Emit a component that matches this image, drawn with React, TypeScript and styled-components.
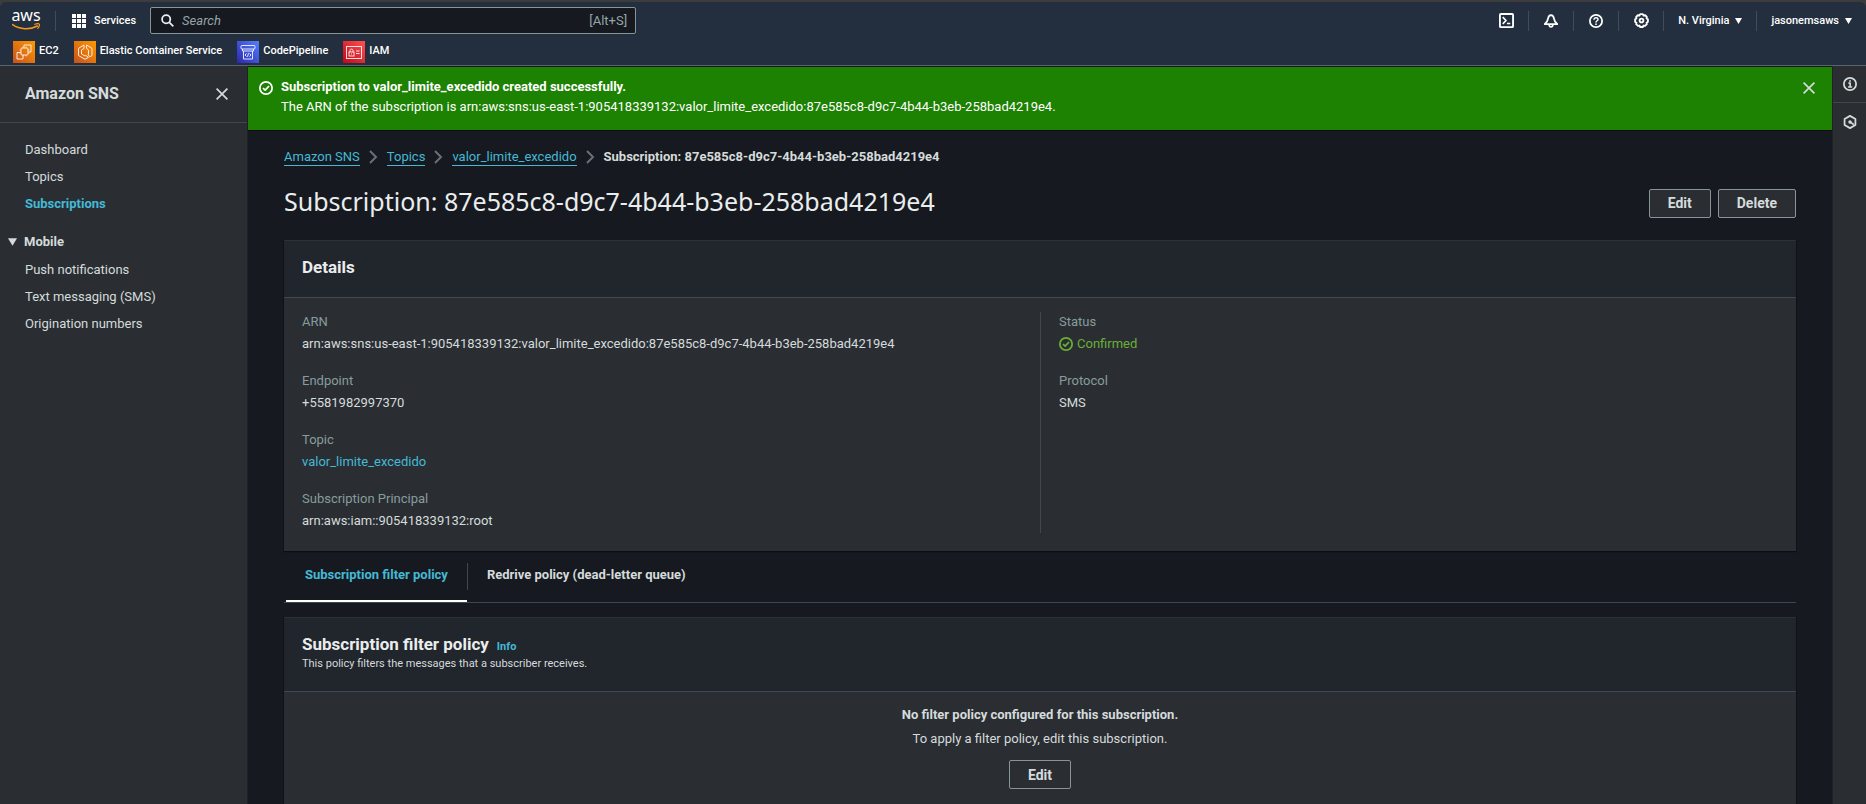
import React from 'react';
import styled, { createGlobalStyle } from 'styled-components';

const c = {
  header: '#232f3e',
  page: '#16191f',
  panel: '#2a2e33',
  panelHead: '#21252c',
  line: '#414750',
  text: '#d5dbdb',
  bright: '#eaeded',
  muted: '#879596',
  link: '#44b9d6',
  success: '#1d8102',
  confirmed: '#6aaf35',
};

const Global = createGlobalStyle`
  *, *::before, *::after { box-sizing: border-box; }
  body {
    margin: 0;
    background: #3c3c3c;
    color: ${c.text};
    font-family: Roboto, "Liberation Sans", sans-serif;
    font-size: 13px;
    line-height: 20px;
  }
  button, input { font: inherit; color: inherit; }
  button { cursor: pointer; }
  h1, h2, p, ul, ol, dl, dd { margin: 0; padding: 0; }
  ul, ol { list-style: none; }
  svg { display: block; flex: none; }
`;

const Shell = styled.div`
  display: flex;
  flex-direction: column;
  height: 100vh;
  padding-top: 2px;
`;

/* ---------- top navigation ---------- */

const Header = styled.header`
  flex: none;
  background: ${c.header};
  border-bottom: 1px solid #5a626c;
  border-radius: 6px 6px 0 0;
  color: #fff;
  font-size: 11px;
  font-weight: 500;
`;

const NavRow = styled.div`
  display: flex;
  align-items: center;
  height: 37px;
`;

const LogoLink = styled.a`
  display: flex;
  padding: 0 14px 0 12px;
`;

const Divider = styled.span`
  width: 1px;
  height: 20px;
  background: #414d5c;
`;

const PlainButton = styled.button`
  display: flex;
  align-items: center;
  justify-content: center;
  padding: 0;
  border: 0;
  background: none;
`;

const ServicesButton = styled(PlainButton)`
  gap: 8px;
  padding: 0 14px 0 16px;
`;

const SearchBox = styled.label`
  display: flex;
  align-items: center;
  width: 486px;
  height: 27px;
  padding: 0 8px 0 10px;
  gap: 8px;
  background: ${c.page};
  border: 1px solid ${c.muted};
  border-radius: 2px;
  color: #95a5a6;
  font-size: 13px;
  font-weight: 400;
`;

const SearchInput = styled.input`
  flex: 1;
  min-width: 0;
  padding: 0;
  border: 0;
  outline: 0;
  background: none;
  &::placeholder { color: #95a5a6; font-style: italic; opacity: 1; }
`;

const Tools = styled.div`
  display: flex;
  align-items: center;
  margin-left: auto;
`;

const ToolButton = styled(PlainButton)`
  width: 44px;
`;

const MenuButton = styled(PlainButton)`
  gap: 6px;
  padding: 0 14px;
`;

const Favorites = styled.nav`
  display: flex;
  gap: 15px;
  height: 26px;
  padding: 2px 13px 0;
`;

const Favorite = styled.a`
  display: flex;
  gap: 4px;
  height: 22px;
  color: #fff;
  text-decoration: none;
`;

/* ---------- page frame ---------- */

const Body = styled.div`
  display: flex;
  flex: 1;
  min-height: 0;
  background: ${c.page};
`;

const Sidebar = styled.aside`
  flex: none;
  width: 248px;
  background: ${c.panel};
  border-right: 1px solid #1e2126;
`;

const SidebarHead = styled.div`
  display: flex;
  align-items: center;
  justify-content: space-between;
  height: 57px;
  padding: 0 19px 0 25px;
  border-bottom: 1px solid ${c.line};
`;

const ServiceLink = styled.a`
  color: ${c.text};
  font-size: 16px;
  font-weight: 700;
  text-decoration: none;
`;

const NavList = styled.ul`
  padding: 0 25px;
`;

const NavBlock = styled.nav`
  padding-top: 13px;
`;

const NavLink = styled.a<{ $active?: boolean }>`
  display: block;
  color: ${(p) => (p.$active ? c.link : c.text)};
  font-weight: ${(p) => (p.$active ? 700 : 400)};
  line-height: 27px;
  text-decoration: none;
`;

const NavGroup = styled.button`
  display: flex;
  align-items: center;
  gap: 7px;
  width: 100%;
  margin: 11px 0 1px;
  padding: 0 8px;
  border: 0;
  background: none;
  font-weight: 700;
  line-height: 27px;
`;

const Main = styled.main`
  flex: 1;
  min-width: 0;
  padding-top: 1px;
  overflow-y: auto;
  scrollbar-width: none;
`;

const Rail = styled.aside`
  flex: none;
  width: 34px;
  background: ${c.panel};
  border-left: 1px solid #1e2126;
`;

const RailButton = styled(PlainButton)<{ $line?: boolean }>`
  width: 100%;
  height: 37px;
  border-bottom: ${(p) => (p.$line ? `1px solid ${c.line}` : '0')};
`;

/* ---------- content ---------- */

const Flash = styled.div`
  display: flex;
  gap: 8px;
  height: 63px;
  padding: 10px 17px 0 11px;
  background: ${c.success};
  box-shadow: 0 1px 0 #0b0d10;
  color: #fff;
`;

const FlashIcon = styled.span`
  padding-top: 4px;
`;

const FlashText = styled.div`
  flex: 1;
`;

const FlashClose = styled(PlainButton)`
  height: 22px;
`;

const Content = styled.div`
  padding: 17px 36px 18px;
`;

const Crumbs = styled.ol`
  display: flex;
  align-items: center;
  gap: 9px;
  height: 20px;
`;

const Crumb = styled.li`
  display: flex;
  align-items: center;
  gap: 9px;
`;

const CrumbLink = styled.a`
  border-bottom: 1px solid ${c.link};
  color: ${c.link};
  line-height: 17px;
  text-decoration: none;
`;

const TitleRow = styled.div`
  display: flex;
  align-items: center;
  justify-content: space-between;
  margin: 18px 0 19px;
`;

const Title = styled.h1`
  padding-bottom: 4px;
  color: ${c.bright};
  font-family: "Noto Sans", sans-serif;
  font-size: 25px;
  font-weight: 400;
  line-height: 32px;
`;

const Actions = styled.div`
  display: flex;
  gap: 7px;
`;

const Button = styled.button`
  height: 29px;
  padding: 0 18px;
  border: 1px solid ${c.muted};
  border-radius: 2px;
  background: ${c.panel};
  color: ${c.text};
  font-size: 14px;
  font-weight: 700;
`;

const Panel = styled.section`
  background: ${c.panel};
  border-top: 1px solid #2d3136;
  box-shadow: 0 1px 1px #0b0d10, -1px 0 0 #101317, 1px 0 0 #101317;
`;

const PanelHead = styled.div<{ $hinted?: boolean }>`
  padding: 16px 18px ${(p) => (p.$hinted ? '17px' : '20px')};
  background: ${c.panelHead};
  border-bottom: 1px solid ${c.line};
`;

const PanelTitleRow = styled.div`
  display: flex;
  align-items: baseline;
  gap: 8px;
  height: 20px;
`;

const PanelTitle = styled.h2`
  color: ${c.bright};
  font-size: 17px;
  font-weight: 700;
  line-height: 20px;
`;

const InfoLink = styled.a`
  color: ${c.link};
  font-size: 11px;
  font-weight: 700;
  line-height: 16px;
  text-decoration: none;
`;

const PanelHint = styled.p`
  font-size: 11px;
`;

const Columns = styled.div`
  display: grid;
  grid-template-columns: 1fr 1fr;
  padding: 14px 18px 18px;
`;

const Column = styled.dl<{ $ruled?: boolean }>`
  display: flex;
  flex-direction: column;
  gap: 15px;
  padding-left: ${(p) => (p.$ruled ? '18px' : '0')};
  border-left: ${(p) => (p.$ruled ? `1px solid ${c.line}` : '0')};
`;

const Label = styled.dt`
  color: #879c9c;
`;

const Value = styled.dd`
  line-height: 24px;
`;

const ValueLink = styled.a`
  color: ${c.link};
  text-decoration: none;
`;

const Status = styled.span`
  display: flex;
  align-items: center;
  gap: 4px;
  color: ${c.confirmed};
`;

const Tabs = styled.div`
  display: flex;
  align-items: stretch;
  height: 52px;
  margin-bottom: 14px;
  padding-left: 2px;
  border-bottom: 1px solid ${c.line};
`;

const Tab = styled.button<{ $active?: boolean }>`
  padding: 0 19px 1px;
  border: 0;
  border-bottom: 2px solid ${(p) => (p.$active ? '#fff' : 'transparent')};
  background: none;
  color: ${(p) => (p.$active ? c.link : c.text)};
  font-weight: 700;
`;

const TabRule = styled.span`
  width: 1px;
  height: 27px;
  margin-top: 12px;
  background: ${c.line};
`;

const Empty = styled.div`
  display: flex;
  flex-direction: column;
  align-items: center;
  gap: 4px;
  padding: 13px 18px 24px;
`;

const EmptyAction = styled.div`
  padding-top: 7px;
`;

/* ---------- drawings ---------- */

const AwsLogo = () => (
  <svg width="29" height="36" viewBox="0 -8 29 36" role="img" aria-label="AWS">
    <text x="14" y="10" textAnchor="middle" fontFamily="Noto Sans, sans-serif" fontSize="16" fontWeight="400" fill="#fff">aws</text>
    <path d="M.6 13.6C8 18.8 18 18.9 25.4 15" fill="none" stroke="#f7981d" strokeWidth="1.6" strokeLinecap="round" />
    <path d="M22.8 13.3c1.8-.6 4-.6 4.5-.2s0 2.8-1.5 4.3" fill="none" stroke="#f7981d" strokeWidth="1.2" strokeLinecap="round" />
  </svg>
);

const GridIcon = () => (
  <svg width="14" height="14" viewBox="0 0 14 14" fill="#fff" aria-hidden="true">
    {[0, 5, 10].map((y) => [0, 5, 10].map((x) => <rect key={`${x}-${y}`} x={x} y={y} width="4" height="4" />))}
  </svg>
);

const SearchIcon = () => (
  <svg width="13" height="13" viewBox="0 0 13 13" fill="none" stroke="#eaeded" strokeWidth="1.8" aria-hidden="true">
    <circle cx="5.2" cy="5.2" r="4.1" />
    <path d="M8.3 8.3l4 4" />
  </svg>
);

const Icon = ({ children, color = '#fff', size = 14 }: { children: React.ReactNode; color?: string; size?: number }) => (
  <svg width={size} height={size} viewBox="0 0 16 16" fill="none" stroke={color} strokeWidth="2" strokeLinejoin="round" aria-hidden="true">
    {children}
  </svg>
);

const ShellIcon = () => (
  <Icon size={15}>
    <rect x="1" y="1" width="14" height="14" rx="1" />
    <path d="M4 4.5L7.5 8 4 11.5M8.5 11.2H12" strokeWidth="1.8" />
  </Icon>
);

const BellIcon = () => (
  <Icon>
    <path d="M8 1.2C5.8 1.4 4.9 3 4.7 5c-.2 2.8-1.7 4.4-3.9 6.600h14.400C13 9.400 11.500 7.800 11.300 5 11.100 3 10.200 1.400 8 1.200z" />
    <path d="M5.800 12.300c.2 1.600 1 2.500 2.200 2.500s2-.9 2.200-2.500" />
  </Icon>
);

const HelpIcon = () => (
  <Icon>
    <circle cx="8" cy="8" r="7" />
    <path d="M5.7 6.500C5.700 5 6.700 4.200 8 4.200s2.300.9 2.300 2.100C10.300 7.700 8 7.800 8 9.600" strokeWidth="1.7" />
    <circle cx="8" cy="11.7" r="1" fill="#fff" stroke="none" />
  </Icon>
);

const GearIcon = () => (
  <Icon size={15}>
    <path d="M6.600 1.200h2.800l.8 1.500 1.700-.3 1.800 1.800-.3 1.600 1.400.9v2.700l-1.400.8.3 1.700-1.900 1.800-1.600-.3-.8 1.500H6.600l-.8-1.500-1.600.3-1.900-1.800.3-1.700-1.400-.8V6.700l1.400-.9-.3-1.600 1.800-1.800 1.700.3z" />
    <circle cx="8" cy="8" r="2" />
  </Icon>
);

const Caret = ({ width = 7, color = '#fff' }: { width?: number; color?: string }) => (
  <svg width={width} height={width - 1} viewBox="0 0 7 6" fill={color} aria-hidden="true">
    <path d="M0 0h7L3.500 6z" />
  </svg>
);

const CloseIcon = () => (
  <svg width="12" height="12" viewBox="0 0 12 12" stroke={c.text} strokeWidth="1.7" aria-hidden="true">
    <path d="M.6.6l10.800 10.800M11.400.6L.6 11.400" />
  </svg>
);

const CheckIcon = ({ color }: { color: string }) => (
  <Icon color={color}>
    <circle cx="8" cy="8" r="7" />
    <path d="M4.600 8.200L7 10.500l4.500-4.800" />
  </Icon>
);

const Chevron = () => (
  <svg width="9" height="14" viewBox="0 0 9 14" fill="none" stroke="#687078" strokeWidth="2" aria-hidden="true">
    <path d="M1 1l6 6-6 6" />
  </svg>
);

const InfoIcon = () => (
  <Icon color={c.text}>
    <circle cx="8" cy="8" r="7" />
    <path d="M6.200 7h2v4.500M5.800 11.500h4.600M7 4.500h2" strokeWidth="1.8" />
  </Icon>
);

const HexIcon = () => (
  <Icon color={c.text}>
    <path d="M8 1l6.200 3.500v7L8 15l-6.200-3.500v-7z" />
    <circle cx="8" cy="8" r="2" fill={c.text} stroke="none" />
    <path d="M8 8l4.500 3" />
  </Icon>
);

const Tile = ({ id, from, to, children }: { id: string; from: string; to: string; children: React.ReactNode }) => (
  <svg width="22" height="22" viewBox="0 0 22 22" fill="none" stroke="#fff" strokeOpacity=".85" aria-hidden="true">
    <linearGradient id={id} x1="0" y1="1" x2="1" y2="0">
      <stop offset="0" stopColor={from} />
      <stop offset="1" stopColor={to} />
    </linearGradient>
    <rect width="22" height="22" fill={`url(#${id})`} stroke="none" />
    {children}
  </svg>
);

const favorites = [
  {
    name: 'EC2', from: '#c8511b', to: '#ff9900',
    art: <><path d="M10 14.500v3.500H4v-6.500h3.500M11 6.500V4h7v7h-2.500" /><rect x="8" y="7" width="7" height="7" rx="1" /><path d="M10 5.500V7M13 5.500V7M10 14v1.500M13 14v1.500M6.500 9H8M6.500 12H8M15 9h1.500M15 12h1.500" strokeWidth=".8" /></>,
  },
  {
    name: 'Elastic Container Service', from: '#c8511b', to: '#ff9900',
    art: <path d="M10 4L4.500 7.300v7.200L11 18.300l3.500-2-2.500-1.800-1 .5-3.500-2V9L10 7.500zM12.500 4L18 7.300v7.200l-2 1.200-2-1.700.5-1V9L12.500 7.500z" />,
  },
  {
    name: 'CodePipeline', from: '#2e27ad', to: '#527fff',
    art: <><rect x="4" y="4.500" width="14" height="3.500" rx="1" /><path d="M5.500 8v2h11V8M6.500 10v8h9v-8M9.500 12.500L8 14l1.500 1.500M12.500 12.500L14 14l-1.500 1.500M11.500 12.200l-1 3.600" /></>,
  },
  {
    name: 'IAM', from: '#bd0816', to: '#ff5252',
    art: <><rect x="3.500" y="5.500" width="15" height="12" /><rect x="6" y="11" width="5" height="4" /><path d="M7 11V9.500C7 8.500 7.700 8 8.500 8s1.500.5 1.500 1.500V11M13 10h3.500M13 12.500h3.500M8.500 12.500v1" /></>,
  },
];

const tools = [
  { name: 'CloudShell', icon: <ShellIcon /> },
  { name: 'Notifications', icon: <BellIcon /> },
  { name: 'Help', icon: <HelpIcon /> },
  { name: 'Settings', icon: <GearIcon /> },
];

const Field = ({ label, children }: { label: string; children: React.ReactNode }) => (
  <div>
    <Label>{label}</Label>
    <Value>{children}</Value>
  </div>
);

export default function App() {
  return (
    <>
      <Global />
      <Shell>
        <Header>
          <NavRow>
            <LogoLink href="#"><AwsLogo /></LogoLink>
            <Divider />
            <ServicesButton><GridIcon />Services</ServicesButton>
            <SearchBox>
              <SearchIcon />
              <SearchInput type="text" placeholder="Search" aria-label="Search" />
              <span>[Alt+S]</span>
            </SearchBox>
            <Tools>
              {tools.map((t) => (
                <React.Fragment key={t.name}>
                  <ToolButton aria-label={t.name}>{t.icon}</ToolButton>
                  <Divider />
                </React.Fragment>
              ))}
              <MenuButton>N. Virginia<Caret /></MenuButton>
              <Divider />
              <MenuButton>jasonemsaws<Caret /></MenuButton>
            </Tools>
          </NavRow>
          <Favorites aria-label="Favorites">
            {favorites.map((f, i) => (
              <Favorite key={f.name} href="#">
                <Tile id={`tile-${i}`} from={f.from} to={f.to}>{f.art}</Tile>
                {f.name}
              </Favorite>
            ))}
          </Favorites>
        </Header>

        <Body>
          <Sidebar>
            <SidebarHead>
              <ServiceLink href="#">Amazon SNS</ServiceLink>
              <PlainButton aria-label="Close navigation"><CloseIcon /></PlainButton>
            </SidebarHead>
            <NavBlock>
              <NavList>
                <li><NavLink href="#">Dashboard</NavLink></li>
                <li><NavLink href="#">Topics</NavLink></li>
                <li><NavLink href="#" $active>Subscriptions</NavLink></li>
              </NavList>
              <NavGroup aria-expanded="true"><Caret width={9} color={c.text} />Mobile</NavGroup>
              <NavList>
                <li><NavLink href="#">Push notifications</NavLink></li>
                <li><NavLink href="#">Text messaging (SMS)</NavLink></li>
                <li><NavLink href="#">Origination numbers</NavLink></li>
              </NavList>
            </NavBlock>
          </Sidebar>

          <Main>
            <Flash role="status">
              <FlashIcon><CheckIcon color="#fff" /></FlashIcon>
              <FlashText>
                <p><b>Subscription to valor_limite_excedido created successfully.</b></p>
                <p>The ARN of the subscription is arn:aws:sns:us-east-1:905418339132:valor_limite_excedido:87e585c8-d9c7-4b44-b3eb-258bad4219e4.</p>
              </FlashText>
              <FlashClose aria-label="Dismiss"><CloseIcon /></FlashClose>
            </Flash>

            <Content>
              <Crumbs>
                {['Amazon SNS', 'Topics', 'valor_limite_excedido'].map((name) => (
                  <Crumb key={name}><CrumbLink href="#">{name}</CrumbLink><Chevron /></Crumb>
                ))}
                <Crumb><b>Subscription: 87e585c8-d9c7-4b44-b3eb-258bad4219e4</b></Crumb>
              </Crumbs>

              <TitleRow>
                <Title>Subscription: 87e585c8-d9c7-4b44-b3eb-258bad4219e4</Title>
                <Actions>
                  <Button>Edit</Button>
                  <Button>Delete</Button>
                </Actions>
              </TitleRow>

              <Panel>
                <PanelHead><PanelTitle>Details</PanelTitle></PanelHead>
                <Columns>
                  <Column>
                    <Field label="ARN">arn:aws:sns:us-east-1:905418339132:valor_limite_excedido:87e585c8-d9c7-4b44-b3eb-258bad4219e4</Field>
                    <Field label="Endpoint">+5581982997370</Field>
                    <Field label="Topic"><ValueLink href="#">valor_limite_excedido</ValueLink></Field>
                    <Field label="Subscription Principal">arn:aws:iam::905418339132:root</Field>
                  </Column>
                  <Column $ruled>
                    <Field label="Status"><Status><CheckIcon color={c.confirmed} />Confirmed</Status></Field>
                    <Field label="Protocol">SMS</Field>
                  </Column>
                </Columns>
              </Panel>

              <Tabs role="tablist">
                <Tab role="tab" aria-selected="true" $active>Subscription filter policy</Tab>
                <TabRule />
                <Tab role="tab" aria-selected="false">Redrive policy (dead-letter queue)</Tab>
              </Tabs>

              <Panel>
                <PanelHead $hinted>
                  <PanelTitleRow>
                    <PanelTitle>Subscription filter policy</PanelTitle>
                    <InfoLink href="#">Info</InfoLink>
                  </PanelTitleRow>
                  <PanelHint>This policy filters the messages that a subscriber receives.</PanelHint>
                </PanelHead>
                <Empty>
                  <b>No filter policy configured for this subscription.</b>
                  <p>To apply a filter policy, edit this subscription.</p>
                  <EmptyAction><Button>Edit</Button></EmptyAction>
                </Empty>
              </Panel>
            </Content>
          </Main>

          <Rail>
            <RailButton $line aria-label="Info"><InfoIcon /></RailButton>
            <RailButton aria-label="Tutorials"><HexIcon /></RailButton>
          </Rail>
        </Body>
      </Shell>
    </>
  );
}
